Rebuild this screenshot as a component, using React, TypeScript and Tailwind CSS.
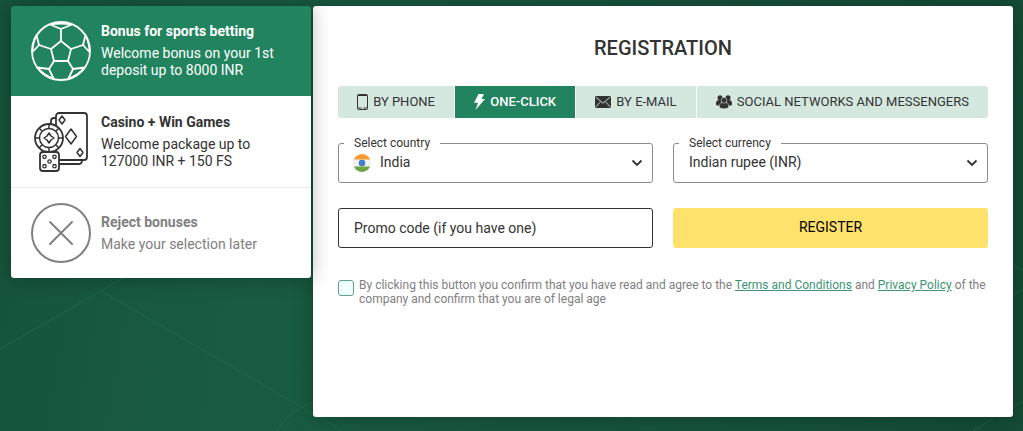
import React, { useState } from 'react';

const bonuses = [
  {
    id: 'sport',
    title: 'Bonus for sports betting',
    text: 'Welcome bonus on your 1st deposit up to 8000 INR',
    icon: <BallIcon />,
    className: 'bg-[#22845f] text-white border-white',
  },
  {
    id: 'casino',
    title: 'Casino + Win Games',
    text: 'Welcome package up to 127000 INR + 150 FS',
    icon: <CasinoIcon />,
    className: 'bg-white text-[#333] border-[#ebebeb]',
  },
  {
    id: 'reject',
    title: 'Reject bonuses',
    text: 'Make your selection later',
    icon: <RejectIcon />,
    className: 'bg-white text-[#808080] border-white',
  },
];

const tabs = [
  { id: 'phone', label: 'BY PHONE', icon: <PhoneIcon /> },
  { id: 'click', label: 'ONE-CLICK', icon: <BoltIcon /> },
  { id: 'email', label: 'BY E-MAIL', icon: <MailIcon /> },
  { id: 'social', label: 'SOCIAL NETWORKS AND MESSENGERS', icon: <PeopleIcon /> },
];

function BallIcon() {
  return (
    <svg width="60" height="60" viewBox="0 0 60 60" fill="none" stroke="currentColor" strokeWidth="1.8" strokeLinejoin="round">
      <circle cx="30" cy="30" r="29" />
      <path d="M30 20l10 8-3 12H23l-3-12z" />
      <path d="M30 20V8M40 28l12-4M37 40l5 8M23 40l-5 8M20 28L8 24" />
      <path d="M19 3.500L30 8l11-4.500M19 3.500q11-2 22 0" />
      <path d="M5.500 14L8 24l-6.500 7Q1.500 22 5.500 14zM54.500 14L52 24l6.500 7Q58.500 22 54.500 14z" />
      <path d="M6.500 46.500L18 48l4.500 9.500Q12 54 6.500 46.500zM53.500 46.500L42 48l-4.500 9.500Q48 54 53.500 46.500z" />
    </svg>
  );
}

function CasinoIcon() {
  return (
    <svg width="60" height="60" viewBox="0 0 60 60" fill="none" stroke="currentColor" strokeWidth="1.8" strokeLinejoin="round">
      <rect x="25" y="1" width="31" height="47" rx="3" />
      <path d="M25 6h-2q-3 0-3 3v4M28 52h20q3 0 3-4" />
      <g strokeWidth="1.5">
        <path d="M31 4l3 4-3 4-3-4zM40 17l5.500 7.500L40 32l-5.500-7.500zM49 36.500l3 4-3 4-3-4z" />
      </g>
      <circle cx="18" cy="26" r="14" fill="white" />
      <g strokeWidth="1.5">
        <circle cx="18" cy="26" r="9.500" />
        <path d="M18 21l2 3 3 2-3 2-2 3-2-3-3-2 3-2z" />
        <path d="M18 12v4.500M18 35.500V40M4 26h4.500M27.500 26H32M8 16l3.300 3.300M28 16l-3.300 3.300M8 36l3.300-3.300M28 36l-3.300-3.300" />
      </g>
      <rect x="9" y="40" width="19" height="19" rx="3" fill="white" />
      <g strokeWidth="1.3">
        <circle cx="13.500" cy="44.800" r="1.700" />
        <circle cx="23.500" cy="44.800" r="1.700" />
        <circle cx="18.500" cy="49.500" r="1.700" />
        <circle cx="13.500" cy="54.200" r="1.700" />
        <circle cx="23.500" cy="54.200" r="1.700" />
      </g>
    </svg>
  );
}

function RejectIcon() {
  return (
    <svg width="60" height="60" viewBox="0 0 60 60" fill="none" stroke="currentColor" strokeWidth="2" strokeLinecap="round">
      <circle cx="30" cy="30" r="29" />
      <path d="M19 19l22 22M41 19L19 41" />
    </svg>
  );
}

function PhoneIcon() {
  return (
    <svg width="11" height="16" viewBox="0 0 11 16" fill="none" stroke="currentColor">
      <rect x="0.5" y="0.5" width="10" height="15" rx="1" />
      <path d="M1 1.500h9M1 14h3.500M6.500 14H10" />
    </svg>
  );
}

function BoltIcon() {
  return (
    <svg width="11" height="16" viewBox="0 0 11 16" fill="currentColor">
      <path d="M4.500 0H10L7.500 5H11L1.500 16 4 8.800H0z" />
    </svg>
  );
}

function MailIcon() {
  return (
    <svg width="16" height="12" viewBox="0 0 16 12">
      <rect width="16" height="12" rx="1" fill="currentColor" />
      <path d="M.5.8L8 7.200 15.500.8M.5 11.300l5-5.600M15.500 11.300l-5-5.600" fill="none" stroke="#d4e8e0" strokeWidth="0.900" />
    </svg>
  );
}

function PeopleIcon() {
  return (
    <svg width="16" height="14" viewBox="0 0 16 14" fill="currentColor">
      <circle cx="4" cy="2.700" r="2.500" />
      <circle cx="12" cy="2.700" r="2.500" />
      <path d="M0 8.500C0 6.500 1 5 3 5h2v5.500H1Q0 10.500 0 9zM16 8.500C16 6.500 15 5 13 5h-2v5.500h4q1 0 1-1.500z" />
      <g stroke="#d4e8e0" strokeWidth="0.500">
        <path d="M3.300 11.500C3.300 9 4.800 7.500 6.500 7.500h3c1.700 0 3.200 1.500 3.200 4 0 3-9.400 3-9.400 0z" />
        <circle cx="8" cy="5.300" r="2.900" />
      </g>
    </svg>
  );
}

function IndiaFlag() {
  return (
    <svg width="18" height="18" viewBox="0 0 18 18">
      <clipPath id="flag">
        <circle cx="9" cy="9" r="9" />
      </clipPath>
      <g clipPath="url(#flag)">
        <rect width="18" height="18" fill="#f0f0f0" />
        <rect width="18" height="5.500" fill="#f79b2e" />
        <rect y="12.500" width="18" height="5.500" fill="#6da544" />
        <circle cx="9" cy="9" r="3.200" fill="#2f6fc4" />
        <circle cx="9" cy="9" r="1.800" fill="none" stroke="#8fb3e0" strokeWidth="0.500" />
      </g>
    </svg>
  );
}

function Backdrop() {
  return (
    <svg
      className="absolute inset-0 h-full w-full"
      viewBox="0 0 1023 431"
      preserveAspectRatio="xMinYMin slice"
      fill="none"
      stroke="#24734f"
      strokeOpacity="0.6"
    >
      <path d="M0 349L101 291 150 262M101 291L343 431M276 431Q290 410 313 402" />
      <path d="M1013 265l10 6M1013 295l10-6M1013 407l10-6M993 419l-20 12" />
    </svg>
  );
}

type SelectFieldProps = {
  id: string;
  label: string;
  options: string[];
  icon?: React.ReactNode;
};

function SelectField({ id, label, options, icon }: SelectFieldProps) {
  return (
    <div className="relative">
      <label htmlFor={id} className="absolute left-[6px] -top-2 bg-white px-[10px] text-xs leading-4">
        {label}
      </label>
      {icon && <span className="absolute left-[15px] top-[11px]">{icon}</span>}
      <select
        id={id}
        className={`h-10 w-full appearance-none rounded-[3px] border border-[#8c8c8c] bg-transparent pb-[2px] text-sm outline-none ${
          icon ? 'pl-[41px]' : 'pl-[15px]'
        }`}
      >
        {options.map((option) => (
          <option key={option}>{option}</option>
        ))}
      </select>
      <svg
        className="pointer-events-none absolute right-[10px] top-4"
        width="12"
        height="8"
        viewBox="0 0 12 8"
        fill="none"
        stroke="#333"
        strokeWidth="1.8"
      >
        <path d="M1.500 1.500L6 6l4.500-4.500" />
      </svg>
    </div>
  );
}

export default function App() {
  const [activeTab, setActiveTab] = useState('click');
  const [agreed, setAgreed] = useState(false);

  return (
    <div className="relative min-h-screen bg-[linear-gradient(100deg,#15533b_0%,#195c42_28%,#144c36_100%)] font-['Roboto',sans-serif] text-[#333]">
      <Backdrop />
      <div className="relative flex items-start gap-[2px] pt-[6px] pr-[10px] pb-[14px] pl-[11px]">
        {/* Bonus list */}
        <div className="relative z-10 w-[300px] shrink-0 overflow-hidden rounded-[3px] shadow-[0_0_20px_rgba(0,0,0,0.3)]">
          {bonuses.map((bonus) => (
            <button
              key={bonus.id}
              type="button"
              className={`flex w-full items-center gap-[10px] border-b px-5 py-[15px] text-left last:border-b-0 ${bonus.className}`}
            >
              <span className="shrink-0">{bonus.icon}</span>
              <span className="flex-1">
                <span className="block text-sm font-bold leading-4">{bonus.title}</span>
                <span className="mt-[6px] block text-sm leading-[17px]">{bonus.text}</span>
              </span>
            </button>
          ))}
        </div>

        {/* Registration form */}
        <div className="min-h-[411px] flex-1 rounded-[3px] bg-white px-[25px] pt-[30px] shadow-[0_0_20px_rgba(0,0,0,0.3)]">
          <h1 className="text-center text-xl font-medium leading-6">REGISTRATION</h1>

          <div className="mt-[26px] flex gap-px overflow-hidden rounded-[3px]">
            {tabs.map((tab) => (
              <button
                key={tab.id}
                type="button"
                onClick={() => setActiveTab(tab.id)}
                className={`flex h-8 flex-auto items-center justify-center gap-[5px] whitespace-nowrap text-[13px] ${
                  activeTab === tab.id ? 'bg-[#22845f] font-medium text-white' : 'bg-[#d4e8e0]'
                }`}
              >
                {tab.icon}
                {tab.label}
              </button>
            ))}
          </div>

          <form onSubmit={(e) => e.preventDefault()}>
            <div className="mt-[25px] grid grid-cols-2 gap-x-5 gap-y-[25px]">
              <SelectField id="country" label="Select country" options={['India']} icon={<IndiaFlag />} />
              <SelectField id="currency" label="Select currency" options={['Indian rupee (INR)']} />
              <input
                type="text"
                aria-label="Promo code"
                placeholder="Promo code (if you have one)"
                className="h-10 w-full rounded-[3px] border border-[#333] px-[15px] text-sm outline-none placeholder:text-[#333]"
              />
              <button type="submit" className="h-10 rounded-[3px] bg-[#ffe26b] pb-[2px] text-sm text-black">
                REGISTER
              </button>
            </div>

            <div className="mt-[30px] flex items-start gap-[5px]">
              <input
                id="agree"
                type="checkbox"
                checked={agreed}
                onChange={(e) => setAgreed(e.target.checked)}
                className="mt-[2px] size-4 shrink-0 appearance-none rounded-[3px] border border-[#5fa387] bg-[#f0fff9] checked:bg-[#22845f]"
              />
              <label htmlFor="agree" className="text-xs leading-[14px] text-[#808080]">
                By clicking this button you confirm that you have read and agree to the{' '}
                <a href="#terms" className="text-[#3c9473] underline">Terms and Conditions</a> and{' '}
                <a href="#privacy" className="text-[#3c9473] underline">Privacy Policy</a> of the company and confirm
                that you are of legal age
              </label>
            </div>
          </form>
        </div>
      </div>
    </div>
  );
}
